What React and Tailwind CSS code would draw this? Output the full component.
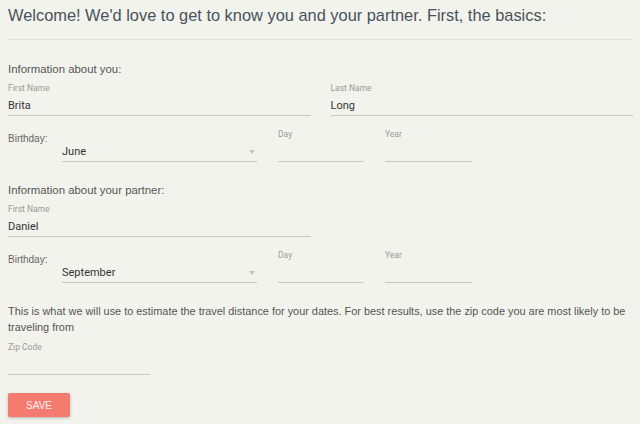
import { useState } from "react";

const ARIAL = { fontFamily: '"Liberation Sans", Arial, sans-serif' };

function Field({ label, value, className = "" }) {
  return (
    <div className={className}>
      <div className="h-[13px] text-[8.5px] leading-[13px] text-[#9a9a96]">{label}</div>
      <div className="h-[21px] border-b border-[#c9c9c2] pt-[1px] text-[11px] leading-[20px] text-[#333]">
        {value}
      </div>
    </div>
  );
}

function BirthdayRow({ month }) {
  return (
    <div className="flex">
      <div className="w-[54px] pt-[5px] text-[10px] leading-[12px] text-[#666]" style={ARIAL}>
        Birthday:
      </div>
      <div className="w-[195px] pt-[13px]">
        <div className="flex h-[21px] items-center justify-between border-b border-[#c9c9c2] pt-[1px] text-[11px] leading-[20px] text-[#333]">
          <span>{month}</span>
          <span className="mr-[2px] h-0 w-0 border-x-[3px] border-t-[4px] border-x-transparent border-t-[#c4c4bd]" />
        </div>
      </div>
      <Field label="Day" value="" className="ml-[21px] w-[86px]" />
      <Field label="Year" value="" className="ml-[21px] w-[87px]" />
    </div>
  );
}

export default function App() {
  const [zip] = useState("");

  return (
    <div
      className="min-h-screen bg-[#f3f3ed] pl-[8px] pr-[7px] pt-[5px]"
      style={{ fontFamily: "Roboto, sans-serif" }}
    >
      <h1 className="h-[20px] text-[16.4px] leading-[20px] text-[#48525a]" style={ARIAL}>
        Welcome! We'd love to get to know you and your partner. First, the basics:
      </h1>
      <div className="mt-[14px] border-t border-[#e3e3dc]" />

      <section>
        <h2 className="mt-[22px] h-[14px] text-[11.4px] leading-[14px] text-[#555]" style={ARIAL}>
          Information about you:
        </h2>
        <div className="mt-[6px] grid grid-cols-2 gap-x-[20px]">
          <Field label="First Name" value="Brita" />
          <Field label="Last Name" value="Long" />
        </div>
        <div className="mt-[12px]">
          <BirthdayRow month="June" />
        </div>
      </section>

      <section>
        <h2 className="mt-[21px] h-[14px] text-[11.4px] leading-[14px] text-[#555]" style={ARIAL}>
          Information about your partner:
        </h2>
        <div className="mt-[6px] grid grid-cols-2 gap-x-[20px]">
          <Field label="First Name" value="Daniel" />
        </div>
        <div className="mt-[12px]">
          <BirthdayRow month="September" />
        </div>
      </section>

      <section>
        <p className="mt-[20px] text-[10.9px] leading-[16px] text-[#555]" style={ARIAL}>
          This is what we will use to estimate the travel distance for your dates. For best results, use the zip code you are most likely to be traveling from
        </p>
        <Field label="Zip Code" value={zip} className="mt-[6px] w-[142px]" />
        <button
          type="button"
          className="mt-[18px] h-[24px] w-[62px] rounded-[2px] bg-[#f47b6f] text-[10px] text-white/90 shadow-[0_1px_3px_rgba(0,0,0,0.25)]"
          style={ARIAL}
        >
          SAVE
        </button>
      </section>
    </div>
  );
}
